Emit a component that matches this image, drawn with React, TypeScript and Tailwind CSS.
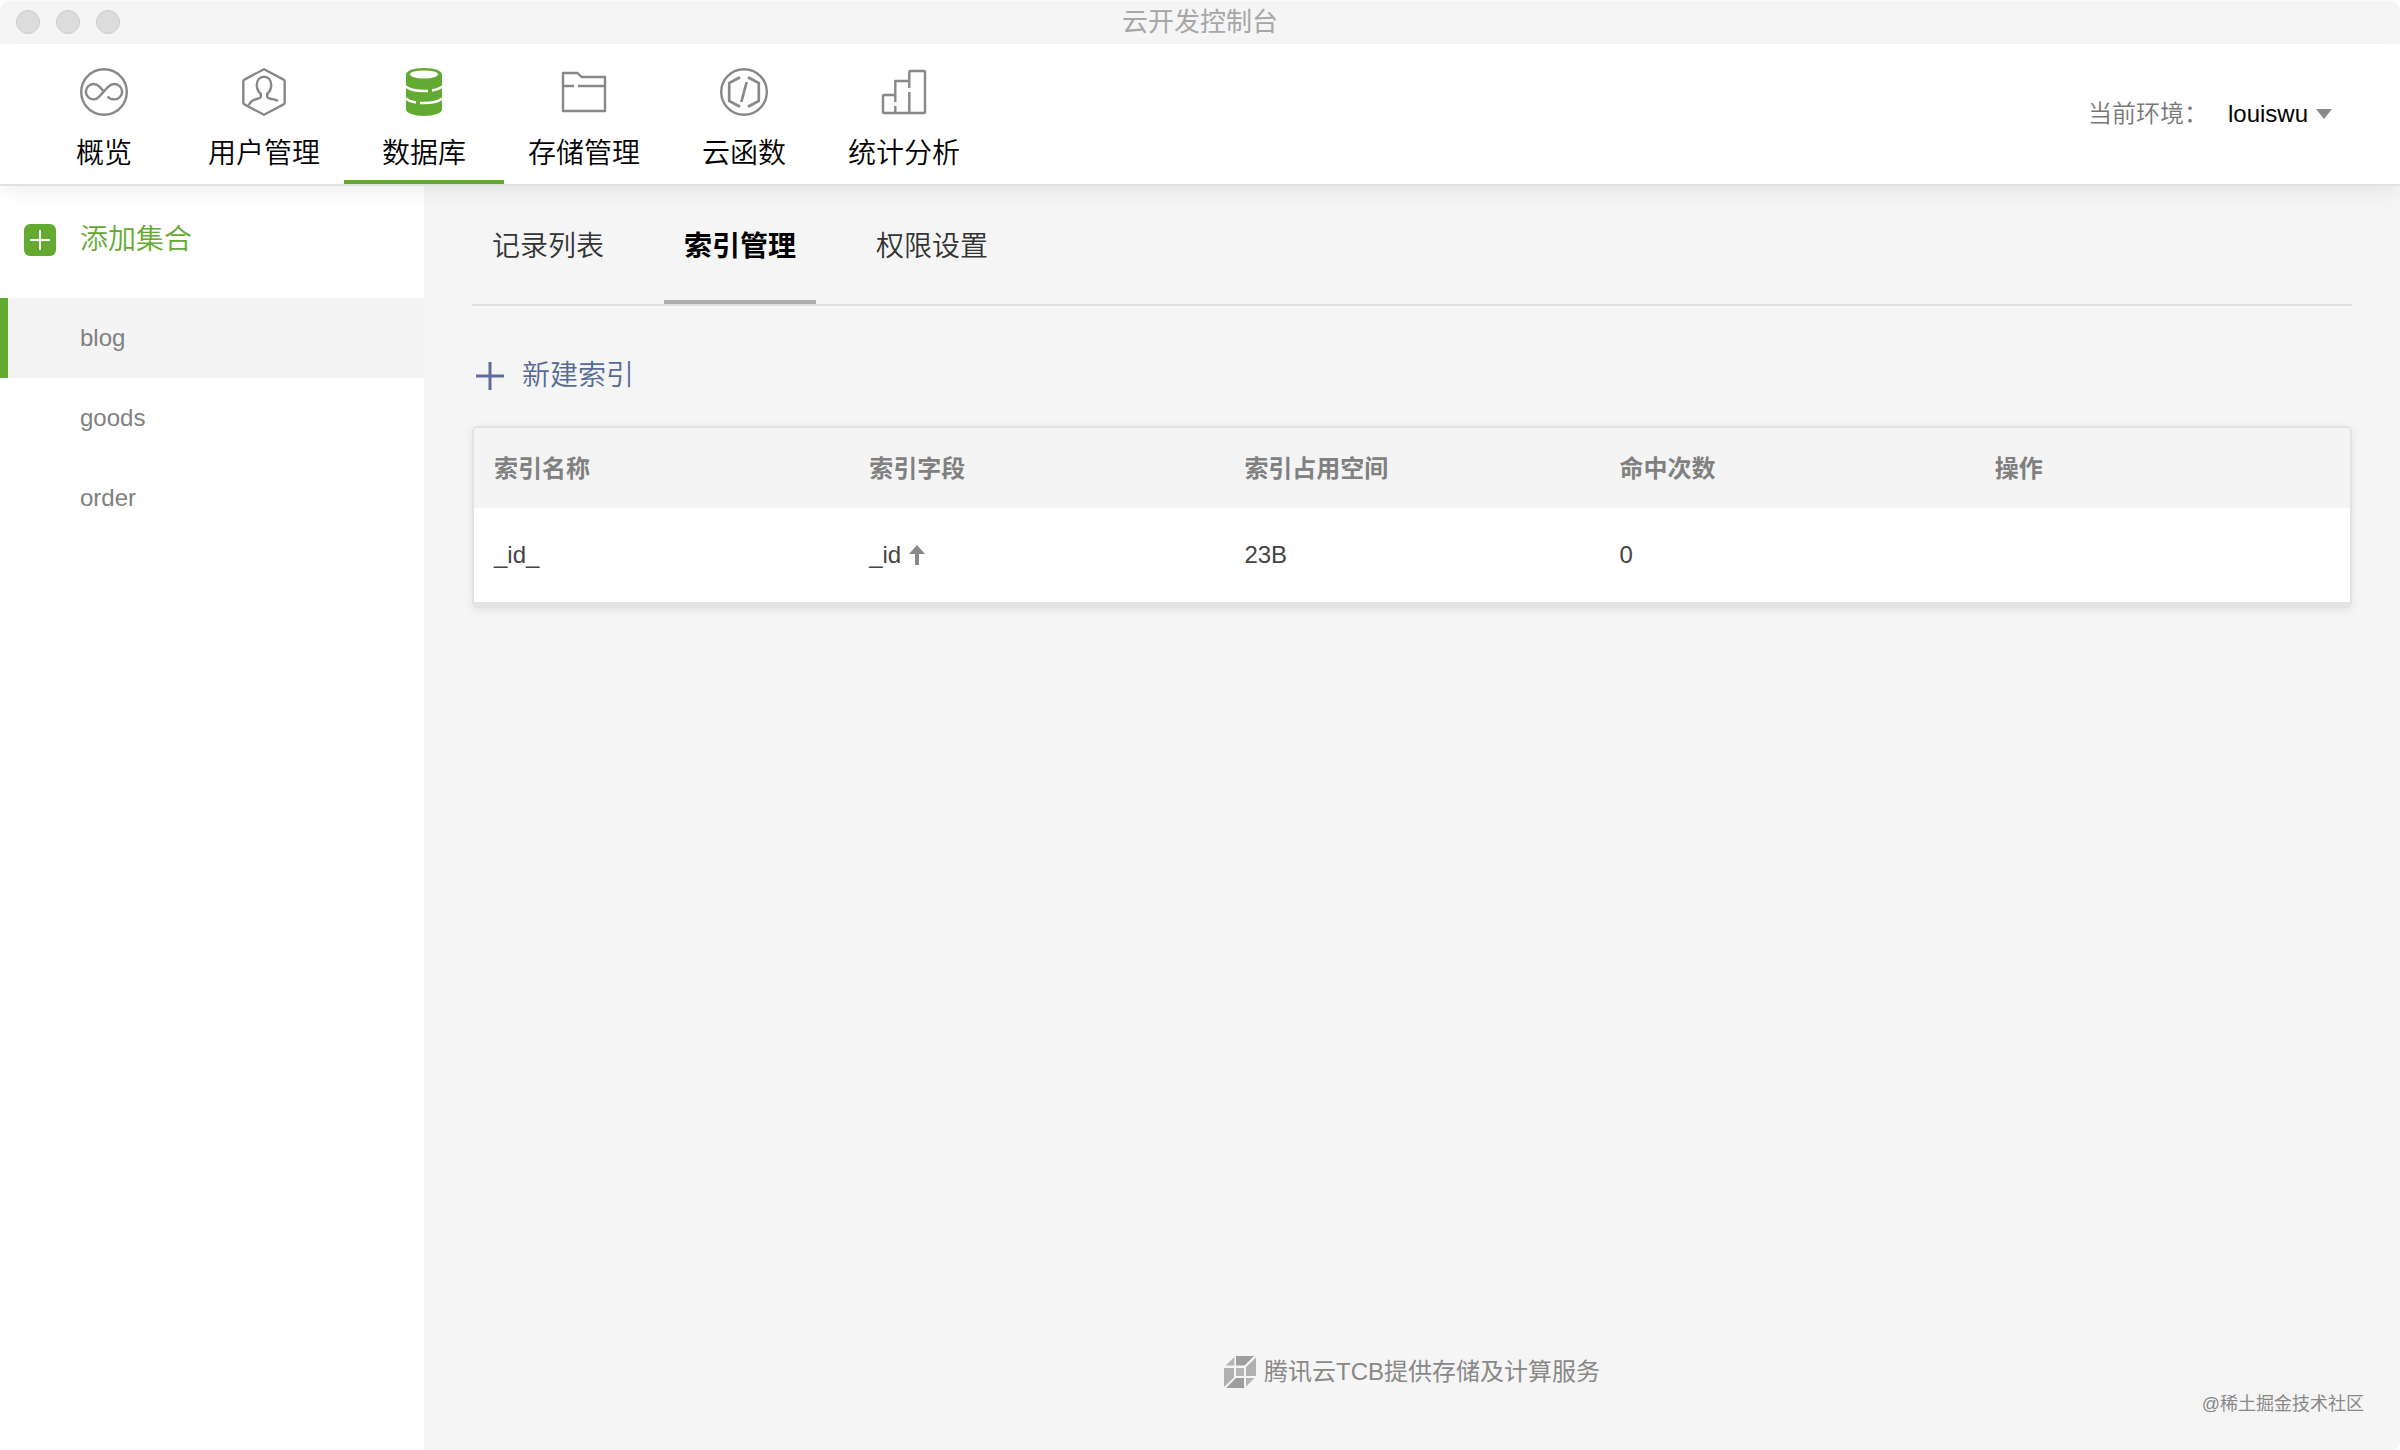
import { useState } from "react";
import clsx from "clsx";

interface NavItem {
  id: string;
  label: string;
  icon: React.ElementType;
}

interface IndexRow {
  name: string;
  field: string;
  size: string;
  hits: number;
}

const iconProps = {
  className: "h-12 w-12",
  viewBox: "0 0 48 48",
  fill: "none",
  stroke: "currentColor",
  strokeWidth: 2.4,
  "aria-hidden": true,
};

const OverviewIcon = () => (
  <svg {...iconProps}>
    <circle cx="24" cy="24" r="22.8" />
    <path d="M27.6 28.4C29.2 30.4 31.6 31.4 34.4 31.4A7.7 7.7 0 0 0 34.4 16C31.8 16 30 17 28.2 18.8L19.2 28.6C17.6 30.4 16 31.4 13.6 31.4A7.7 7.7 0 0 1 13.6 16C16 16 17.8 17 19.4 18.6L23.8 23.4" />
  </svg>
);

const UserIcon = () => (
  <svg {...iconProps} strokeLinejoin="round">
    <path d="M24 1.2L43.6 11.6Q44.7 12.2 44.7 13.4V34.6Q44.7 35.8 43.6 36.4L24 46.8L4.4 36.4Q3.3 35.8 3.3 34.6V13.4Q3.3 12.2 4.4 11.6Z" />
    <path d="M8.8 37.2C10.2 33.4 13.4 31.6 17.6 30.8C19.6 30.4 20.8 30 20.8 28.6V25.8C18 23.6 16.8 20.6 16.8 17C16.8 12 19.8 8.8 24 8.8S31.2 12 31.2 17C31.2 20.6 30 23.6 27.2 25.8V28.6C27.2 30 28.4 30.4 30.4 30.8C33.4 31.2 35.8 31.6 38 32.9" />
  </svg>
);

const DatabaseIcon = () => (
  <svg {...iconProps} stroke="none">
    <path
      fill="currentColor"
      d="M6 6.4C6 2.8 14 0 24 0S42 2.8 42 6.4V41.6C42 45.2 34 48 24 48S6 45.2 6 41.6Z"
    />
    <ellipse cx="24" cy="6.4" rx="14" ry="4" fill="#fff" />
    <path
      d="M5.6 18.4C10 21.6 16 23 24 23H28M32 22.5C36.4 21.8 39.8 20.4 42.4 18.4M5.6 30.4C8.4 32.6 11.6 33.9 16 34.5M20 35H24C32 35 38 33.6 42.4 30.4"
      stroke="#fff"
      strokeWidth="2.5"
    />
  </svg>
);

const StorageIcon = () => (
  <svg {...iconProps} strokeLinejoin="round">
    <path d="M3 5H17.5L21.5 9H45V43H3ZM3 18H14M18 18H45" />
  </svg>
);

const FunctionIcon = () => (
  <svg {...iconProps}>
    <circle cx="24" cy="24" r="22.8" />
    <path
      d="M20 9.2L9.2 15V33L20 38.8M28 9.2L38.8 15V33L28 38.8M26.7 14L21.3 34"
      strokeWidth="2.7"
    />
  </svg>
);

const StatsIcon = () => (
  <svg {...iconProps} strokeLinejoin="round">
    <path d="M15.3 34V13H29.3M15.3 27H4Q3 27 3 28V44Q3 45 4 45H44Q45 45 45 44V4Q45 3 44 3H30.3Q29.3 3 29.3 4V20M29.3 24V45M15.3 38V45" />
  </svg>
);

const TcbLogo = () => (
  <svg className="h-8 w-8" viewBox="0 0 32 32" aria-hidden="true">
    <path d="M12 0H30L20.5 9.6H12ZM12 22H20V32H2Z" fill="#9e9e9e" />
    <path d="M0 12H10V21.6L0 31ZM32 1.6V20H22V11Z" fill="#b0b0b0" />
    <path d="M10.3 1V9.6H1.7ZM22 22H30.6L22 30.6Z" fill="#b4b4b4" />
    <path d="M12 12H20V20H12Z" fill="#b6b6b6" />
  </svg>
);

const NAV_ITEMS: NavItem[] = [
  { id: "overview", label: "概览", icon: OverviewIcon },
  { id: "users", label: "用户管理", icon: UserIcon },
  { id: "database", label: "数据库", icon: DatabaseIcon },
  { id: "storage", label: "存储管理", icon: StorageIcon },
  { id: "functions", label: "云函数", icon: FunctionIcon },
  { id: "stats", label: "统计分析", icon: StatsIcon },
];

const COLLECTIONS = ["blog", "goods", "order"];

const TABS = ["记录列表", "索引管理", "权限设置"];

const COLUMNS = ["索引名称", "索引字段", "索引占用空间", "命中次数", "操作"];

const ROWS: IndexRow[] = [{ name: "_id_", field: "_id", size: "23B", hits: 0 }];

const TitleBar = () => (
  <div className="relative flex h-11 items-center justify-center rounded-t-[10px] bg-[#f5f5f5] shadow-[inset_0_1px_0_#fafafa]">
    <div className="absolute left-4 flex gap-4">
      {["close", "minimize", "zoom"].map((name) => (
        <span key={name} className="h-6 w-6 rounded-full border border-[#cdcdcd] bg-[#dcdcdc]" />
      ))}
    </div>
    <h1 className="text-[26px] leading-9 text-[#a6a6a6]">云开发控制台</h1>
  </div>
);

const App = () => {
  const [section, setSection] = useState("database");
  const [collection, setCollection] = useState("blog");
  const [tab, setTab] = useState("索引管理");

  return (
    <div className="relative flex min-h-screen flex-col bg-white font-['Liberation_Sans','Noto_Sans_CJK_SC',sans-serif] text-2xl">
      <TitleBar />

      {/* Header */}
      <header className="relative z-10 flex items-center justify-between border-b-2 border-[#e2e2e2] bg-white pl-6 shadow-[0_8px_20px_-4px_rgba(0,0,0,0.08)]">
        <nav className="flex">
          {NAV_ITEMS.map((item) => {
            const Icon = item.icon;
            const active = item.id === section;

            return (
              <button
                key={item.id}
                onClick={() => setSection(item.id)}
                className={clsx(
                  "flex h-[140px] w-40 cursor-pointer flex-col items-center gap-[18px] border-b-4 pt-6",
                  active ? "border-[#62aa31]" : "border-transparent"
                )}
              >
                <span className={active ? "text-[#62aa31]" : "text-[#888]"}>
                  <Icon />
                </span>
                <span className="text-[28px] leading-10 font-[350] text-black">{item.label}</span>
              </button>
            );
          })}
        </nav>

        <div className="flex items-center pr-[68px]">
          <label htmlFor="env" className="mr-5 font-[350] text-[#777]">
            当前环境：
          </label>
          <div className="flex items-center gap-2">
            <select
              id="env"
              className="field-sizing-content cursor-pointer appearance-none bg-transparent text-black"
              defaultValue="louiswu"
            >
              <option value="louiswu">louiswu</option>
            </select>
            <svg className="h-[10px] w-4" viewBox="0 0 16 10" fill="#888" aria-hidden="true">
              <path d="M0 0H16L8 10Z" />
            </svg>
          </div>
        </div>
      </header>

      <div className="flex flex-1">
        {/* Collections */}
        <aside className="w-[424px] shrink-0 bg-white">
          <button className="flex h-28 w-full cursor-pointer items-center gap-6 pb-1 pl-6 text-[28px] font-[350] text-[#62aa31]">
            <svg className="h-8 w-8" viewBox="0 0 32 32" aria-hidden="true">
              <rect width="32" height="32" rx="6" fill="#62aa31" />
              <path d="M16 6V26M6 16H26" stroke="#fff" strokeWidth="2" />
            </svg>
            添加集合
          </button>
          <ul>
            {COLLECTIONS.map((name) => (
              <li key={name}>
                <button
                  onClick={() => setCollection(name)}
                  className={clsx(
                    "h-20 w-full cursor-pointer border-l-8 pl-[72px] text-left text-[#808080]",
                    name === collection ? "border-[#62aa31] bg-[#f4f4f4]" : "border-transparent"
                  )}
                >
                  {name}
                </button>
              </li>
            ))}
          </ul>
        </aside>

        <main className="flex flex-1 flex-col rounded-br-lg bg-[#f5f5f5] px-12">
          <div role="tablist" className="flex gap-10 border-b-2 border-[#e0e0e0]">
            {TABS.map((label) => (
              <button
                key={label}
                role="tab"
                aria-selected={label === tab}
                onClick={() => setTab(label)}
                className={clsx(
                  "h-[118px] cursor-pointer border-b-4 px-5 pt-2 text-[28px]",
                  label === tab
                    ? "border-[#adadad] font-bold text-black"
                    : "border-transparent font-[350] text-[#333]"
                )}
              >
                {label}
              </button>
            ))}
          </div>

          <button className="mt-12 flex cursor-pointer items-center gap-[18px] self-start pl-1 text-[28px] leading-[44px] font-[350] text-[#576b95]">
            <svg className="h-7 w-7" viewBox="0 0 28 28" stroke="#606c98" strokeWidth="3" aria-hidden="true">
              <path d="M14 0V28M0 14H28" />
            </svg>
            新建索引
          </button>

          <div className="mt-7 overflow-hidden rounded-md border-2 border-b-[6px] border-[#e2e2e2] bg-white shadow-[0_2px_8px_rgba(0,0,0,0.08)]">
            <table className="w-full table-fixed text-left">
              <thead className="bg-[#f4f4f4] text-[#808080]">
                <tr className="h-20">
                  {COLUMNS.map((column) => (
                    <th key={column} scope="col" className="px-5 pt-[2px] font-bold">
                      {column}
                    </th>
                  ))}
                </tr>
              </thead>
              <tbody className="text-[#444]">
                {ROWS.map((row) => (
                  <tr key={row.name} className="h-[94px]">
                    <td className="px-5">{row.name}</td>
                    <td className="px-5">
                      <span className="flex items-center gap-2">
                        {row.field}
                        <svg className="h-6 w-4" viewBox="0 0 16 24" fill="#888" aria-hidden="true">
                          <path d="M8 2L16 11H10V22H6V11H0Z" />
                        </svg>
                      </span>
                    </td>
                    <td className="px-5">{row.size}</td>
                    <td className="px-5">{row.hits}</td>
                    <td className="px-5" />
                  </tr>
                ))}
              </tbody>
            </table>
          </div>

          <footer className="mt-auto flex items-center justify-center gap-2 pb-[60px] text-[#888]">
            <TcbLogo />
            <span className="leading-9">腾讯云TCB提供存储及计算服务</span>
          </footer>
        </main>
      </div>

      <span className="absolute right-9 bottom-8 text-lg leading-7 text-[#888]">@稀土掘金技术社区</span>
    </div>
  );
};

export default App;
